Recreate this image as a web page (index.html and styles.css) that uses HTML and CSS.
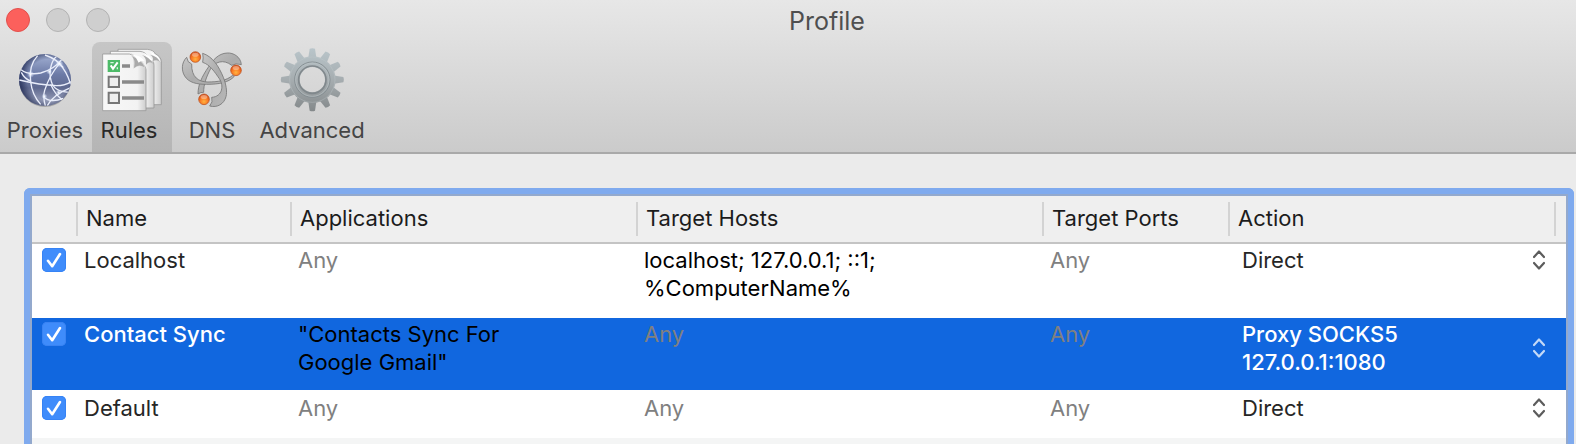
FILE: index.html
```html
<!DOCTYPE html>
<html lang="en">
<head>
<meta charset="utf-8">
<title>Profile</title>
<link rel="stylesheet" href="styles.css">
</head>
<body>
<svg class="defs" aria-hidden="true">
  <defs>
    <symbol id="check" viewBox="0 0 24 24"><path d="M6 12.800 10.200 18.200 18 6" fill="none" stroke="#fff" stroke-width="2.600" stroke-linecap="round" stroke-linejoin="round"/></symbol>
    <symbol id="updown" viewBox="0 0 12 20"><path d="M1 7 6 1.500 11 7M1 13 6 18.500 11 13" fill="none" stroke="currentColor" stroke-width="2.200" stroke-linecap="round" stroke-linejoin="round"/></symbol>
  </defs>
</svg>
<header class="chrome">
  <div class="titlebar">
    <div class="lights">
      <button class="light light-close" aria-label="Close"></button>
      <button class="light" aria-label="Minimize"></button>
      <button class="light" aria-label="Zoom"></button>
    </div>
    <h1 class="title">Profile</h1>
  </div>
  <nav class="toolbar">
    <button class="tool tool-proxies">
      <svg class="tool-icon" viewBox="9 9 192 192" aria-hidden="true">
        <defs>
          <linearGradient id="globe" x1="0" y1="0" x2="0" y2="1"><stop offset="0" stop-color="#a3b1d4"/><stop offset=".4" stop-color="#6c7aa6"/><stop offset=".65" stop-color="#5f698f"/><stop offset="1" stop-color="#a9afc6"/></linearGradient>
          <radialGradient id="globe-edge" cx=".56" cy=".5" r=".53"><stop offset=".75" stop-color="#1d2750" stop-opacity="0"/><stop offset="1" stop-color="#1d2750" stop-opacity=".65"/></radialGradient>
          <radialGradient id="spark"><stop offset="0" stop-color="#fff"/><stop offset="1" stop-color="#cfe0ff" stop-opacity="0"/></radialGradient>
          <clipPath id="globe-clip"><circle cx="105" cy="105" r="78"/></clipPath>
        </defs>
        <ellipse cx="105" cy="109" rx="77" ry="77" fill="#000" opacity=".22"/>
        <circle cx="105" cy="105" r="78" fill="url(#globe)"/>
        <circle cx="105" cy="105" r="78" fill="url(#globe-edge)"/>
        <g clip-path="url(#globe-clip)" fill="none" stroke="#e9edfa" stroke-width="4">
          <path d="M30 72Q55 92 92 84Q135 72 158 40"/>
          <path d="M28 105Q90 120 140 122Q165 122 184 110"/>
          <path d="M83 32Q55 62 62 110Q66 150 92 178"/>
          <path d="M34 82Q44 102 62 108"/>
          <path d="M160 32Q135 24 124 60Q116 85 124 110Q132 140 176 142"/>
          <path d="M148 56Q118 92 104 136Q98 155 106 182"/>
          <path d="M100 155Q120 175 160 160M112 182Q128 150 182 128"/>
          <path d="M148 56Q170 78 182 118M105 30Q140 42 160 68"/>
          <path d="M122 118Q136 152 162 168"/>
        </g>
        <g fill="url(#spark)"><circle cx="62" cy="88" r="11"/><circle cx="148" cy="56" r="12"/><circle cx="118" cy="80" r="9"/><circle cx="146" cy="142" r="9"/><circle cx="103" cy="154" r="9"/></g>
      </svg>
      <span>Proxies</span>
    </button>
    <button class="tool tool-rules" aria-current="page">
      <svg class="tool-icon" viewBox="24 24 192 192" aria-hidden="true">
        <defs><linearGradient id="paper" x1="0" x2="1"><stop offset="0" stop-color="#f8f8f8"/><stop offset=".8" stop-color="#f2f2f2"/><stop offset="1" stop-color="#cdcdcd"/></linearGradient></defs>
        <g stroke="#999" stroke-width="2.500" stroke-linejoin="round" fill="url(#paper)">
          <path d="M78 28H166Q186 30 190 42Q208 50 208 66V194H78Z"/>
          <path d="M55 34H144Q162 36 168 52Q186 58 186 76V204H55Z"/>
          <path d="M32 42H112Q132 46 136 68Q160 72 162 88V212H32Z"/>
        </g>
        <path d="M114 38Q128 48 124 86Q144 70 161 86Q156 56 114 38Z" fill="#d8d8d8"/>
        <path d="M118 48Q132 58 126 84Q140 70 158 82Q150 60 118 48Z" fill="#aaa"/>
        <path d="M122 44Q142 44 158 62Q144 62 140 68Q134 52 122 44ZM148 36Q164 42 166 62Q176 58 185 66Q176 46 148 36ZM170 34Q186 42 184 60Q196 54 206 66Q202 44 170 34Z" fill="#fff"/>
        <path d="M150 45Q164 52 162 74Q174 60 185 73Q174 52 150 45ZM174 44Q186 50 182 64Q194 56 205 66Q196 48 174 44Z" fill="#aaa"/>
        <path d="M47 60H84V96H47Z" fill="#4dbb68"/>
        <path d="M56 76 63 86 77 67" fill="none" stroke="#fff" stroke-width="6"/>
        <path d="M55 68H65M76 88V82" stroke="#d8f4df" stroke-width="4"/>
        <path d="M50 110H81V141H50ZM50 158H81V189H50Z" fill="#eee" stroke="#777" stroke-width="6"/>
        <path d="M90 78H114M90 126H156M90 174H156" stroke="#8a8a8a" stroke-width="11"/>
      </svg>
      <span>Rules</span>
    </button>
    <button class="tool tool-dns">
      <svg class="tool-icon" viewBox="0 0 192 192" aria-hidden="true">
        <defs>
          <linearGradient id="arm" x1="0" y1="0" x2="1" y2="1"><stop offset="0" stop-color="#c6c6c6"/><stop offset=".5" stop-color="#acacac"/><stop offset="1" stop-color="#b8b8b8"/></linearGradient>
          <radialGradient id="node" cx=".5" cy=".7" r=".65"><stop offset="0" stop-color="#ffb340"/><stop offset=".55" stop-color="#fa7a24"/><stop offset="1" stop-color="#d8501a"/></radialGradient>
        </defs>
        <g fill="url(#arm)" stroke="#767676" stroke-width="2.500" stroke-linejoin="round">
          <path d="M184 50C182 26 160 14 142 15C114 16 98 38 86 56C64 88 54 112 54 138Q62 132 71 133C71 110 78 88 92 62C104 42 130 32 155 52Q168 44 184 50Z"/>
          <path d="M20 28C4 44 4 68 14 84C26 104 50 109 80 109C116 109 146 104 163 85L158 82C140 98 112 102 84 102C56 102 34 88 35 48Q22 44 20 28Z"/>
          <path d="M68 16Q71 30 68 43C90 50 104 72 118 92C132 112 128 146 95 148Q100 162 89 174C112 180 132 168 138 146C142 130 138 108 130 88C116 54 98 26 68 16Z"/>
        </g>
        <g stroke="#b34816" stroke-width="2"><circle cx="46" cy="27" r="16" fill="url(#node)"/><circle cx="168" cy="67" r="16" fill="url(#node)"/><circle cx="72" cy="154" r="16" fill="url(#node)"/></g>
        <g fill="#fff" opacity=".35"><ellipse cx="46" cy="20" rx="10" ry="6"/><ellipse cx="168" cy="60" rx="10" ry="6"/><ellipse cx="72" cy="147" rx="10" ry="6"/></g>
      </svg>
      <span>DNS</span>
    </button>
    <button class="tool tool-advanced">
      <svg class="tool-icon" viewBox="330 54 192 192" aria-hidden="true">
        <defs>
          <linearGradient id="steel" gradientUnits="userSpaceOnUse" x1="0" y1="-94" x2="0" y2="94"><stop offset="0" stop-color="#b9c5ca"/><stop offset=".5" stop-color="#a6adb0"/><stop offset="1" stop-color="#84898b"/></linearGradient>
          <path id="tooth" d="M-13-60-8-93Q0-96 8-93L13-60Z"/>
          <mask id="hole" maskUnits="userSpaceOnUse" x="-100" y="-100" width="200" height="200"><g fill="#fff"><circle r="70"/><use href="#tooth"/><use href="#tooth" transform="rotate(30)"/><use href="#tooth" transform="rotate(60)"/><use href="#tooth" transform="rotate(90)"/><use href="#tooth" transform="rotate(120)"/><use href="#tooth" transform="rotate(150)"/><use href="#tooth" transform="rotate(180)"/><use href="#tooth" transform="rotate(210)"/><use href="#tooth" transform="rotate(240)"/><use href="#tooth" transform="rotate(270)"/><use href="#tooth" transform="rotate(300)"/><use href="#tooth" transform="rotate(330)"/></g><circle r="38" fill="#000"/></mask>
        </defs>
        <g transform="translate(427 149)">
          <rect x="-98" y="-98" width="196" height="196" fill="url(#steel)" mask="url(#hole)"/>
          <circle r="53" fill="none" stroke="#858e92" stroke-width="3"/>
          <circle r="50" fill="none" stroke="#b9c2c6" stroke-width="2"/>
          <circle r="41" fill="none" stroke="#80888c" stroke-width="5"/>
          <circle r="68" fill="none" stroke="#c3cbce" stroke-width="2" opacity=".5"/>
        </g>
      </svg>
      <span>Advanced</span>
    </button>
  </nav>
</header>
<main class="content">
  <div class="focus-ring">
    <div class="table-frame">
      <table class="rules">
        <colgroup><col class="col-on"><col class="col-name"><col class="col-apps"><col class="col-hosts"><col class="col-ports"><col class="col-action"><col class="col-end"></colgroup>
        <thead>
          <tr>
            <td><div class="head"></div></td>
            <th scope="col"><div class="head">Name</div></th>
            <th scope="col"><div class="head">Applications</div></th>
            <th scope="col"><div class="head">Target Hosts</div></th>
            <th scope="col"><div class="head">Target Ports</div></th>
            <th scope="col"><div class="head">Action</div></th>
            <td></td>
          </tr>
        </thead>
        <tbody>
          <tr>
            <td><label class="tick"><input type="checkbox" checked aria-label="Enable Localhost"><svg aria-hidden="true"><use href="#check"/></svg></label></td>
            <td class="name">Localhost</td>
            <td class="any">Any</td>
            <td>localhost; 127.0.0.1; ::1;<br>%ComputerName%</td>
            <td class="any">Any</td>
            <td><div class="picker"><select aria-label="Action for Localhost"><option>Direct</option></select><svg aria-hidden="true"><use href="#updown"/></svg></div></td>
            <td></td>
          </tr>
          <tr class="selected">
            <td><label class="tick"><input type="checkbox" checked aria-label="Enable Contact Sync"><svg aria-hidden="true"><use href="#check"/></svg></label></td>
            <td class="name">Contact Sync</td>
            <td>"Contacts Sync For<br>Google Gmail"</td>
            <td class="any">Any</td>
            <td class="any">Any</td>
            <td><div class="picker picker-wrapped"><select aria-label="Action for Contact Sync"><option>Proxy SOCKS5 127.0.0.1:1080</option></select><span>Proxy SOCKS5<br>127.0.0.1:1080</span><svg aria-hidden="true"><use href="#updown"/></svg></div></td>
            <td></td>
          </tr>
          <tr>
            <td><label class="tick"><input type="checkbox" checked aria-label="Enable Default"><svg aria-hidden="true"><use href="#check"/></svg></label></td>
            <td class="name">Default</td>
            <td class="any">Any</td>
            <td class="any">Any</td>
            <td class="any">Any</td>
            <td><div class="picker"><select aria-label="Action for Default"><option>Direct</option></select><svg aria-hidden="true"><use href="#updown"/></svg></div></td>
            <td></td>
          </tr>
        </tbody>
      </table>
    </div>
  </div>
</main>
</body>
</html>
```

FILE: styles.css
```css
* { box-sizing: border-box; }

body {
  margin: 0;
  min-height: 100vh;
  display: flex;
  flex-direction: column;
  background: #ebebeb;
  color: #000;
  font: 22px/28px Inter, "Liberation Sans", sans-serif;
}

button, select { font: inherit; color: inherit; border: 0; background: none; }

.defs { position: absolute; width: 0; height: 0; }

.chrome {
  background: linear-gradient(#e7e7e7, #cbcbcb);
  border-bottom: 2px solid #a9a9a9;
}

.titlebar {
  display: flex;
  align-items: center;
  height: 42px;
  padding: 0 0 2px 6px;
}

.lights { display: flex; gap: 16px; }

.light {
  width: 24px;
  height: 24px;
  padding: 0;
  border: 1px solid #b3b3b3;
  border-radius: 50%;
  background: #cfcfcf;
}

.light-close { background: #fc605c; border-color: #e2504c; }

.title {
  flex: 1;
  margin: 0;
  padding: 2px 32px 0 0;
  text-align: center;
  font-size: 25px;
  font-weight: 400;
  color: #4f4f4f;
}

.toolbar { display: flex; gap: 4px; padding-left: 2px; }

.tool {
  display: flex;
  flex-direction: column;
  align-items: center;
  gap: 4px;
  height: 110px;
  padding: 6px 0 0;
  border-radius: 8px 8px 0 0;
  color: #454545;
}

.tool-icon { width: 64px; height: 64px; }
.tool-proxies { width: 86px; }
.tool-rules { width: 80px; background: linear-gradient(#c6c6c6, #b5b5b5); color: #292929; }
.tool-rules span { padding-right: 6px; }
.tool-dns { width: 72px; }
.tool-advanced { width: 120px; }

.content { flex: 1; display: flex; padding: 34px 2px 0 24px; }

.focus-ring {
  flex: 1;
  display: flex;
  border: 6px solid #7faaee;
  border-bottom: 0;
  border-radius: 6px 6px 0 0;
}

.table-frame {
  flex: 1;
  border: 2px solid #93a9cd;
  border-bottom: 0;
  background: #f4f5f5;
}

.rules {
  width: 100%;
  table-layout: fixed;
  border-collapse: separate;
  border-spacing: 0;
}

.col-on { width: 46px; }
.col-name { width: 214px; }
.col-apps { width: 346px; }
.col-hosts { width: 406px; }
.col-ports { width: 186px; }
.col-end { width: 10px; }

.rules th, .rules thead td {
  height: 48px;
  padding: 6px 0;
  border-bottom: 2px solid #c4c4c4;
  background: #efefef;
  text-align: left;
  font-weight: 400;
  color: #1c1c1c;
}

.head {
  height: 34px;
  padding-left: 8px;
  line-height: 32px;
  border-right: 2px solid #d3d3d3;
}

.rules tbody td {
  padding: 2px 0 14px 6px;
  vertical-align: top;
  background: #fff;
  border-bottom: 2px solid #fff;
}

.rules tbody td:first-child { padding-left: 10px; }
.rules tbody td:nth-child(6) { padding-left: 10px; }
.rules .name, .picker { color: #262626; }
.rules tbody .any { color: #808080; }
.rules .selected td { background: #1167df; background-clip: padding-box; }
.rules .selected .name, .selected .picker { color: #fff; font-weight: 500; }

.tick { display: grid; width: 24px; height: 28px; align-items: center; }
.tick input, .tick svg { grid-area: 1 / 1; width: 24px; height: 24px; margin: 0; }
.tick input { appearance: none; border-radius: 5px; background: #3f8cfb; box-shadow: inset 0 0 0 1px #3683f5; }
.selected .tick input { box-shadow: inset 0 0 0 1px #3a83f2; }
.tick svg { pointer-events: none; }

.picker { display: grid; align-items: center; padding: 0 11px 0 2px; }
.picker > * { grid-area: 1 / 1; }
.picker select { appearance: none; width: 100%; height: 28px; padding: 0; }
.picker svg { width: 12px; height: 20px; justify-self: end; color: #5c5c5c; pointer-events: none; }
.picker-wrapped select { height: 100%; opacity: 0; }
.picker-wrapped span { pointer-events: none; }
.selected .picker svg { color: #c3d9f7; }
```
